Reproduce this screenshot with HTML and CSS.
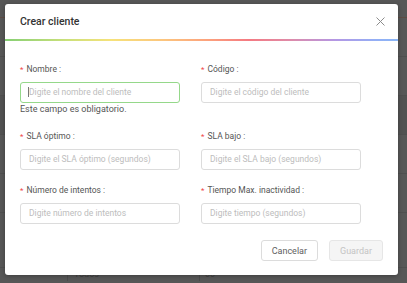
FILE: index.html
```html
<!DOCTYPE html>
<html lang="es">

<head>
    <meta charset="UTF-8">
    <meta name="viewport" content="width=device-width, initial-scale=1.0">
    <title>Crear cliente</title>
    <link rel="stylesheet" href="styles.css">
</head>

<body>
    <!-- pagina de fondo (tabla de clientes) -->
    <div class="page">
        <div class="page-top"></div>
        <div class="page-row"></div>
        <div class="page-row"></div>
        <div class="page-row dark"></div>
        <div class="page-row"></div>
        <div class="page-row"></div>
        <div class="page-last">
            <span class="cell first"></span>
            <span class="cell second">Todos</span>
            <span class="cell third">00</span>
        </div>
    </div>

    <div class="modal">
        <div class="modal-header">
            <span class="modal-title">Crear cliente</span>
            <span class="modal-close">
                <svg width="9" height="9" viewBox="0 0 9 9">
                    <path d="M0.5 0.5 L8.5 8.5 M8.5 0.5 L0.5 8.5" stroke="#8c8c8c" stroke-width="1" fill="none" />
                </svg>
            </span>
        </div>
        <div class="rainbow"></div>

        <div class="modal-body">
            <div class="field">
                <label class="field-label"><span class="req">*</span>Nombre :</label>
                <div class="input focus"><span class="caret"></span>Digite el nombre del cliente</div>
                <div class="field-error">Este campo es obligatorio.</div>
            </div>
            <div class="field">
                <label class="field-label"><span class="req">*</span>Código :</label>
                <div class="input">Digite el código del cliente</div>
            </div>
            <div class="field">
                <label class="field-label"><span class="req">*</span>SLA óptimo :</label>
                <div class="input">Digite el SLA óptimo (segundos)</div>
            </div>
            <div class="field">
                <label class="field-label"><span class="req">*</span>SLA bajo :</label>
                <div class="input">Digite el SLA bajo (segundos)</div>
            </div>
            <div class="field">
                <label class="field-label"><span class="req">*</span>Número de intentos :</label>
                <div class="input">Digite número de intentos</div>
            </div>
            <div class="field">
                <label class="field-label"><span class="req">*</span>Tiempo Max. inactividad :</label>
                <div class="input">Digite tiempo (segundos)</div>
            </div>
        </div>

        <div class="modal-footer">
            <button class="btn">Cancelar</button>
            <button class="btn disabled">Guardar</button>
        </div>
    </div>
</body>

</html>
```

FILE: styles.css
```css
* {
    box-sizing: border-box;
}

body {
    margin: 0;
    width: 407px;
    height: 283px;
    overflow: hidden;
    background: #575757;
    font-family: Roboto, "Liberation Sans", sans-serif;
}

/* fondo */
.page-top {
    height: 18px;
    border-bottom: 1px solid #5e4c43;
}

.page-row {
    height: 39px;
    border-bottom: 1px solid #4f4f4f;
}

.page-row.dark {
    background: #525252;
}

.page-last {
    display: flex;
    height: 14px;
    margin-top: 54px;
    border-top: 1px solid #4f4f4f;
}

.cell {
    font-size: 9px;
    line-height: 12px;
    color: #3e3e3e;
}

.cell.first {
    width: 68px;
    border-right: 1px solid #4c4c4c;
}

.cell.second {
    width: 132px;
    padding-left: 6px;
    border-right: 1px solid #4c4c4c;
}

.cell.third {
    padding-left: 5px;
}

/* modal */
.modal {
    position: absolute;
    left: 5px;
    top: 4px;
    width: 393px;
    height: 271px;
    background: #fff;
    border-radius: 3px;
    box-shadow: 0 1px 4px rgba(0, 0, 0, 0.3);
    display: flex;
    flex-direction: column;
}

.modal-header {
    height: 35px;
    padding: 0 13px 0 15px;
    display: flex;
    align-items: center;
    justify-content: space-between;
}

.modal-title {
    font-size: 10.5px;
    font-weight: 500;
    color: #333;
}

.modal-close {
    display: flex;
    width: 9px;
    height: 9px;
}

.rainbow {
    height: 2px;
    background: linear-gradient(to right, #86cf74, #c8e07a 15%, #f6e27a 27%, #fcc67e 40%, #fca07c 52%, #f47a82 62%, #e08aa6 72%, #b497e4 84%, #94aef5 94%, #8ab6f6);
}

.modal-body {
    display: grid;
    grid-template-columns: 160px 160px;
    column-gap: 21px;
    row-gap: 14px;
    align-items: start;
    padding: 22px 15px 0 15px;
}

.field-label {
    display: block;
    height: 12px;
    line-height: 12px;
    font-size: 8.5px;
    color: #555;
    margin-bottom: 7px;
}

.req {
    color: #f04848;
    font-size: 8px;
    margin-right: 3px;
}

.input {
    height: 21px;
    line-height: 19px;
    border: 1px solid #dcdcdc;
    border-radius: 3px;
    padding: 0 8px;
    font-size: 8.5px;
    color: #bdbdbd;
    white-space: nowrap;
}

.input.focus {
    border-color: #95d88a;
    padding-left: 7px;
}

.caret {
    display: inline-block;
    width: 1px;
    height: 10px;
    background: #777;
    vertical-align: -2px;
}

.field-error {
    font-size: 9px;
    line-height: 13px;
    color: #555;
}

.modal-footer {
    display: flex;
    justify-content: flex-end;
    gap: 11px;
    padding: 16px 15px 0 15px;
}

.btn {
    height: 21px;
    padding: 0 10px;
    font-family: Roboto, "Liberation Sans", sans-serif;
    font-size: 9px;
    color: #606060;
    background: #fff;
    border: 1px solid #dcdcdc;
    border-radius: 3px;
}

.btn.disabled {
    color: #c4c4c4;
    background: #f5f5f5;
    border-color: #e6e6e6;
    padding: 0 10px;
}
```
